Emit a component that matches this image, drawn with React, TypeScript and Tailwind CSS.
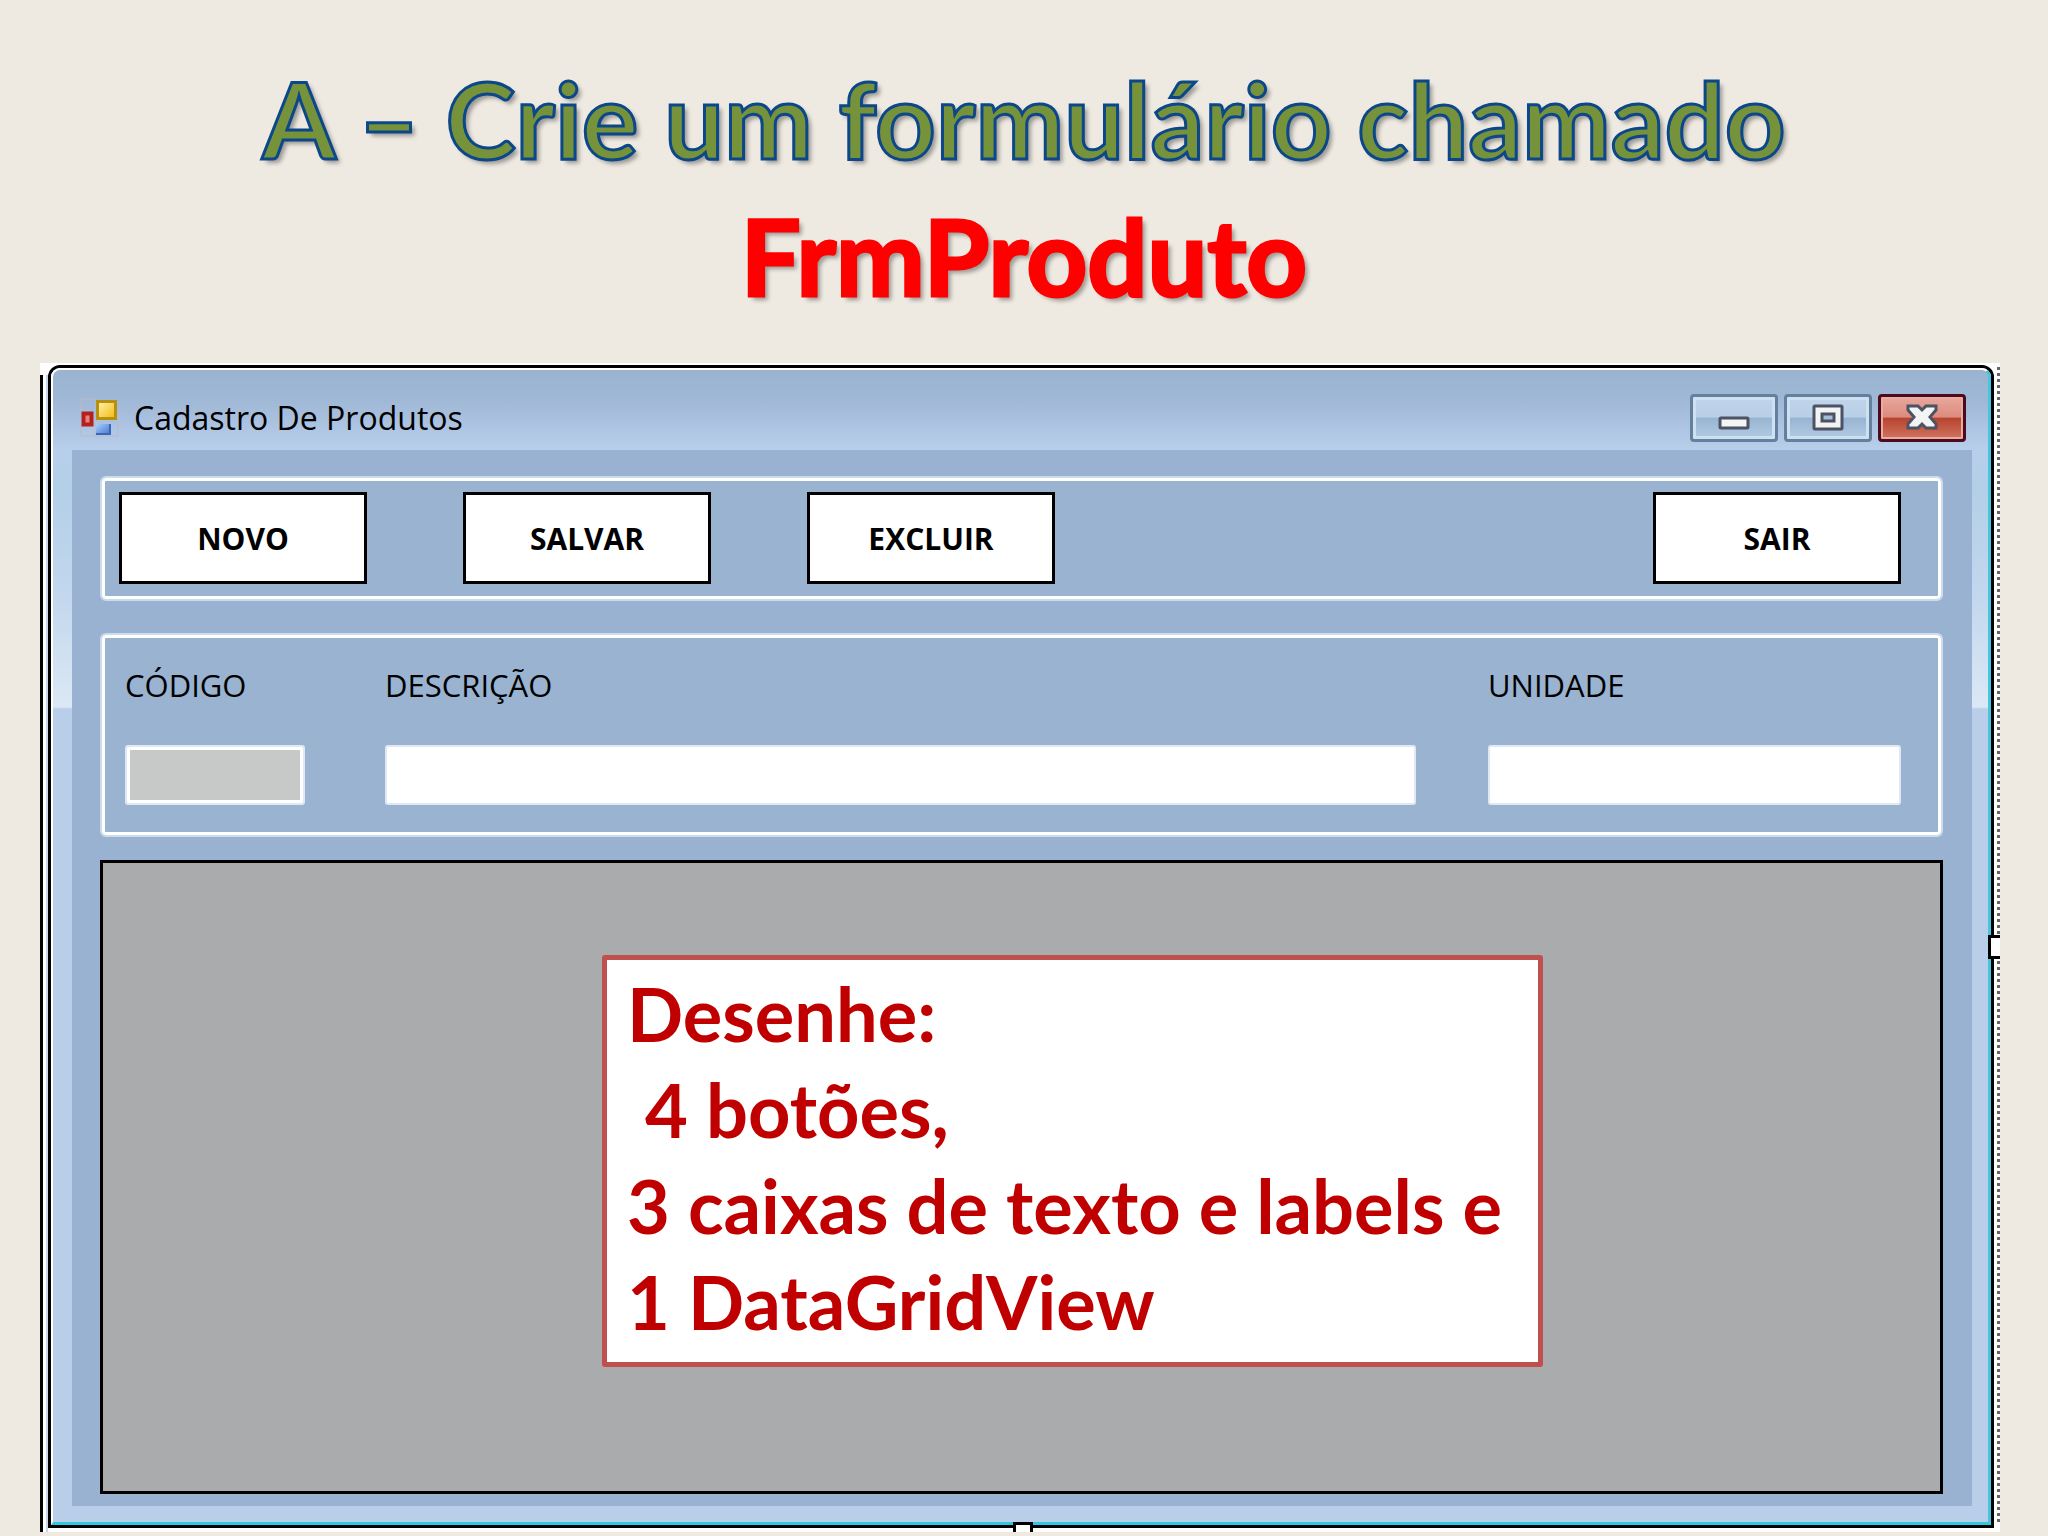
import type { ReactNode } from 'react'

const actions = ['NOVO', 'SALVAR', 'EXCLUIR']

function AppIcon() {
  return (
    <svg width="40" height="40" viewBox="0 0 40 40" aria-hidden="true">
      <defs>
        <linearGradient id="gold" x1="0" y1="0" x2="1" y2="1">
          <stop offset="0" stopColor="#fff3b0" />
          <stop offset="1" stopColor="#f2b90c" />
        </linearGradient>
        <linearGradient id="sky" x1="0" y1="0" x2="1" y2="1">
          <stop offset="0" stopColor="#a9cdfb" />
          <stop offset="1" stopColor="#3f74cf" />
        </linearGradient>
      </defs>
      <path d="M1 14V1h15M1 27v11h37V23M16 1v13M1 27h15v11" fill="none" stroke="#bcb9c6" strokeWidth="1" />
      <rect x="17.5" y="3.5" width="18" height="17" fill="url(#gold)" stroke="#b8900f" strokeWidth="3" />
      <rect x="3.5" y="15.5" width="8" height="11" fill="#e98080" stroke="#b3201d" strokeWidth="4" />
      <rect x="16" y="26" width="14" height="11" fill="url(#sky)" />
      <path d="M16 36h14V26" fill="none" stroke="#3a68b8" strokeWidth="2" />
    </svg>
  )
}

function CaptionButton({ label, close, children }: { label: string; close?: boolean; children: ReactNode }) {
  return (
    <button
      type="button"
      aria-label={label}
      className={`flex h-12 w-[88px] items-center justify-center rounded-[4px] border-[3px] ${
        close
          ? 'border-[#4d0a1c] bg-[linear-gradient(#e9a79c_0%,#dc8b7e_48%,#b8432f_50%,#cf7560_100%)] shadow-[inset_0_0_0_2px_#e9aba2]'
          : 'border-[#64809f] bg-[linear-gradient(#c1d5ea_0%,#b8cfe7_48%,#98b4d1_50%,#b3cce5_100%)] shadow-[inset_0_0_0_3px_#cfe1f1]'
      }`}
    >
      <svg width="34" height="30" viewBox="0 0 34 30" fill="#f3f4f4" stroke="#4d5364" strokeWidth="3">
        {children}
      </svg>
    </button>
  )
}

function Group({ children, className }: { children: ReactNode; className: string }) {
  return (
    <div
      className={`flex rounded-[6px] border-2 border-[#cbdceb] bg-[#99b3d1] pr-10 shadow-[inset_0_0_0_3px_#fff] ${className}`}
    >
      {children}
    </div>
  )
}

function FormButton({ children }: { children: ReactNode }) {
  return (
    <button
      type="button"
      className="h-23 w-62 border-[3px] border-black bg-white text-[30px] font-bold text-black"
    >
      {children}
    </button>
  )
}

function Field({ id, label, className, disabled }: { id: string; label: string; className: string; disabled?: boolean }) {
  return (
    <div className={`flex flex-col ${className}`}>
      <label htmlFor={id} className="mb-10 text-[31px] leading-10">
        {label}
      </label>
      <input
        id={id}
        type="text"
        disabled={disabled}
        className="h-15 w-full rounded-[3px] border-2 border-[#dfe8f3] bg-white px-3 text-[31px] shadow-[inset_0_0_0_3px_#fff] disabled:bg-[#c7c8c8]"
      />
    </div>
  )
}

export default function App() {
  return (
    <div className="flex min-h-screen flex-col bg-[#eeeae2] pb-1 pl-10 pr-12 font-['Open_Sans',sans-serif] text-black">
      <h1 className="pb-[39px] pl-2 pt-[50px] text-center font-['Lato',sans-serif] text-[106px] font-bold leading-[137px] [text-shadow:4px_4px_4px_rgba(0,0,0,0.35)]">
        <span className="block text-[#76933c] [-webkit-text-stroke:3px_#0b4789]">A – Crie um formulário chamado</span>
        <span className="block text-[#ff0000] [-webkit-text-stroke:3px_#ff0000]">FrmProduto</span>
      </h1>

      <main className="relative flex flex-1 flex-col bg-white pb-1 pl-2 pr-1.5 pt-0.5">
        {/* selection outline */}
        <span className="absolute bottom-0 left-0 top-3 w-[3px] bg-black" />
        <span className="absolute bottom-0 left-1.5 top-3 w-0.5 bg-[#c5d6ee]" />
        <span className="absolute bottom-2 right-0 top-1 w-[3px] bg-[repeating-linear-gradient(#666_0px,#666_3px,#fff_3px,#fff_6px)]" />

        <section className="flex flex-1 flex-col rounded-t-[12px] border-[3px] border-black">
          <div className="flex flex-1 flex-col rounded-t-[9px] border-2 border-b-[3px] border-r-[3px] border-white border-b-[#30c8dd] border-r-[#45c6e0] bg-[linear-gradient(#9ab3d0_0px,#9fb8d6_30px,#b8cfec_80px,#b3cfe7_120px,#c3d8ee_230px,#dbe8f5_337px,#b9cfe9_339px,#b9cfe9_100%)] pb-4 pl-[19px] pr-4">
            <header className="flex h-20 items-center gap-3.5 pl-2 pr-1.5 pt-4">
              <AppIcon />
              <h2 className="flex-1 text-[32px] leading-10">Cadastro De Produtos</h2>
              <div className="flex gap-1.5">
                <CaptionButton label="Minimizar">
                  <rect x="3" y="15" width="28" height="10" rx="1" />
                </CaptionButton>
                <CaptionButton label="Maximizar">
                  <rect x="3" y="3" width="28" height="23" rx="1" />
                  <rect x="11" y="11" width="12" height="7" fill="#a5bdd8" />
                </CaptionButton>
                <CaptionButton label="Fechar" close>
                  <path d="M3 3h10l4 4 4-4h10v4l-6 7 6 7v4h-10l-4-4-4 4H3v-4l6-7-6-7z" />
                </CaptionButton>
              </div>
            </header>

            <div className="flex flex-1 flex-col bg-[#9ab2d2] pb-3 pl-7 pr-[29px] pt-[26px]">
              <Group className="mb-8 items-start gap-24 pb-[15px] pl-[17px] pt-3.5">
                {actions.map((a) => (
                  <FormButton key={a}>{a}</FormButton>
                ))}
                <div className="ml-auto flex">
                  <FormButton>SAIR</FormButton>
                </div>
              </Group>

              <Group className="mb-[23px] pb-[30px] pl-[23px] pt-[30px]">
                <Field id="codigo" label="CÓDIGO" className="mr-20 w-[180px]" disabled />
                <Field id="descricao" label="DESCRIÇÃO" className="mr-18 flex-1" />
                <Field id="unidade" label="UNIDADE" className="w-[413px]" />
              </Group>

              <div className="relative flex-1 border-[3px] border-black bg-[#aaabac]">
                <p className="absolute left-[499px] top-[92px] w-[941px] whitespace-pre rounded-[3px] border-[5px] border-[#c0504d] bg-white pb-3 pl-5 pt-1.5 font-['Lato',sans-serif] text-[74px] font-bold leading-24 text-[#c00000]">
                  {'Desenhe:\n 4 botões,\n3 caixas de texto e labels e\n1 DataGridView'}
                </p>
              </div>
            </div>
          </div>
        </section>

        {/* resize handles */}
        <span className="absolute right-0 top-[572px] h-6 w-3 border-[3px] border-r-0 border-black bg-white" />
        <span className="absolute bottom-0 left-[973px] h-2.5 w-5 border-[3px] border-b-0 border-black bg-white" />
      </main>
    </div>
  )
}
